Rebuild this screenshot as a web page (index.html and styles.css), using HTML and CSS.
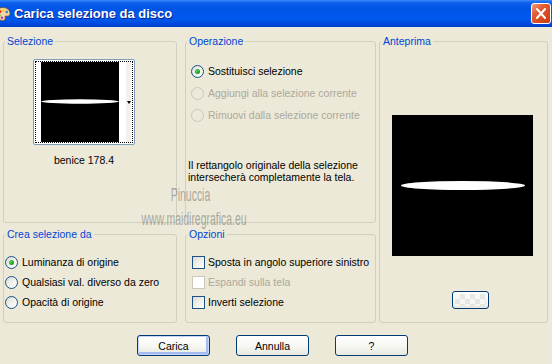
FILE: index.html
```html
<!DOCTYPE html>
<html lang="it">
<head>
  <meta charset="UTF-8">
  <title>Carica selezione da disco</title>
  <link rel="stylesheet" href="styles.css">
</head>
<body>
  <div class="window">
    <div class="titlebar">
      <svg class="app-icon" viewBox="0 0 16 16">
        <path d="M8 1.5c4 0 7 2.6 7 6 0 2.4-1.8 3.2-3.2 2.6-1.2-.5-2 .3-1.6 1.6.5 1.6-.6 2.8-2.6 2.8C3.9 14.5 1 11.6 1 8s3-6.5 7-6.5z" fill="#f3d7a2" stroke="#7a4b1e" stroke-width="0.8"/>
        <circle cx="5" cy="5.5" r="1.5" fill="#e8321e"/>
        <circle cx="8.6" cy="4.4" r="1.4" fill="#f6d21c"/>
        <circle cx="11.8" cy="6" r="1.3" fill="#2a7de1"/>
        <circle cx="4.2" cy="9.4" r="1.4" fill="#3bb33b"/>
        <circle cx="7" cy="11.8" r="1.2" fill="#a33ad0"/>
      </svg>
      <span class="title">Carica selezione da disco</span>
      <button class="close-btn" title="Chiudi">
        <svg viewBox="0 0 20 21">
          <line x1="5.5" y1="5.5" x2="14.5" y2="15.5" stroke="#fff" stroke-width="2.2" stroke-linecap="round"/>
          <line x1="14.5" y1="5.5" x2="5.5" y2="15.5" stroke="#fff" stroke-width="2.2" stroke-linecap="round"/>
        </svg>
      </button>
    </div>

    <div class="dialog">
      <div class="groups">
        <fieldset class="group g-sel">
          <legend>Selezione</legend>
          <div class="sel-wrap">
            <div class="thumb">
              <div class="thumb-focus">
                <div class="thumb-img">
                  <svg viewBox="0 0 78 80" width="78" height="80">
                    <ellipse cx="39" cy="39.5" rx="39" ry="2.2" fill="#fff"/>
                  </svg>
                </div>
                <div class="thumb-strip"><span class="arrow"></span></div>
              </div>
            </div>
            <div class="thumb-name">benice 178.4</div>
          </div>
        </fieldset>

        <fieldset class="group g-op">
          <legend>Operazione</legend>
          <div class="opt-list op-list">
            <label class="opt"><span class="radio checked"></span>Sostituisci selezione</label>
            <label class="opt disabled"><span class="radio"></span>Aggiungi alla selezione corrente</label>
            <label class="opt disabled"><span class="radio"></span>Rimuovi dalla selezione corrente</label>
          </div>
          <p class="info">Il rettangolo originale della selezione<br>intersecherà completamente la tela.</p>
        </fieldset>

        <fieldset class="group g-prev">
          <legend>Anteprima</legend>
          <div class="preview">
            <svg viewBox="0 0 141 141" width="141" height="141">
              <ellipse cx="71" cy="70.5" rx="62" ry="4.5" fill="#fff"/>
            </svg>
          </div>
          <button class="swatch-btn"><span class="checker"></span></button>
        </fieldset>

        <fieldset class="group g-crea">
          <legend>Crea selezione da</legend>
          <div class="opt-list crea-list">
            <label class="opt"><span class="radio checked"></span>Luminanza di origine</label>
            <label class="opt"><span class="radio"></span>Qualsiasi val. diverso da zero</label>
            <label class="opt"><span class="radio"></span>Opacità di origine</label>
          </div>
        </fieldset>

        <fieldset class="group g-opz">
          <legend>Opzioni</legend>
          <div class="opt-list opz-list">
            <label class="opt"><span class="check"></span>Sposta in angolo superiore sinistro</label>
            <label class="opt disabled"><span class="check"></span>Espandi sulla tela</label>
            <label class="opt"><span class="check"></span>Inverti selezione</label>
          </div>
        </fieldset>
      </div>

      <div class="buttons">
        <button class="btn default">Carica</button>
        <button class="btn">Annulla</button>
        <button class="btn">?</button>
      </div>

      <div class="watermark">Pinuccia<br>www.maidiregrafica.eu</div>
    </div>
  </div>
</body>
</html>
```

FILE: styles.css
```css
body {
  margin: 0;
  background: #ece9d8;
  font-family: 'Liberation Sans', Arial, sans-serif;
  font-size: 10.5px;
  line-height: 13px;
  color: #000;
}
.window {
  width: 552px;
  height: 364px;
  overflow: hidden;
  background: #ece9d8;
}

/* Title bar */
.titlebar {
  height: 27px;
  display: flex;
  align-items: center;
  overflow: hidden;
  background: linear-gradient(#3d8af7 0, #0a5eea 3px, #0055e5 9px, #0058ee 19px, #0049dc 24px, #003ccb 27px);
}
.app-icon {
  width: 16px;
  height: 16px;
  margin-left: -5px;
  margin-right: 3px;
  flex: none;
}
.title {
  flex: 1;
  color: #fff;
  font-weight: bold;
  font-size: 13px;
  line-height: 15px;
  text-shadow: 1px 1px #0a1e8c;
  white-space: nowrap;
}
.close-btn {
  width: 20px;
  height: 21px;
  margin-right: 1px;
  padding: 0;
  border: 1px solid #fff;
  border-radius: 3px;
  background: linear-gradient(135deg, #f29d7e 0, #e45c33 35%, #d4491f 70%, #c23c16 100%);
  display: flex;
}
.close-btn svg {
  width: 100%;
  height: 100%;
}

/* Groups */
.groups {
  display: grid;
  grid-template-columns: 174px 8px 191px 3px 169px;
  grid-template-rows: 188px 5px 95px;
  padding: 8px 0 0 3px;
}
.group {
  margin: 0;
  padding: 0;
  min-width: 0;
  border: 1px solid #d0d0bf;
  border-radius: 3px;
  box-sizing: border-box;
}
.group legend {
  margin-left: 1px;
  padding: 0 2px;
  color: #0046d5;
  line-height: 13px;
}
.g-sel { grid-column: 1; grid-row: 1; }
.g-op { grid-column: 3; grid-row: 1; }
.g-prev { grid-column: 5; grid-row: 1 / 4; }
.g-crea { grid-column: 1; grid-row: 3; }
.g-opz { grid-column: 3; grid-row: 3; }

/* Selection thumbnail */
.sel-wrap {
  width: 102px;
  margin: 11px 0 0 29px;
}
.thumb {
  width: 102px;
  height: 86px;
  box-sizing: border-box;
  border: 1px solid #7f9db9;
  border-radius: 2px;
  padding: 1px;
  background: #fff;
}
.thumb-focus {
  height: 100%;
  box-sizing: border-box;
  border: 1px dotted #000;
  padding: 0 1px 0 5px;
  display: flex;
}
.thumb-img {
  width: 78px;
  height: 80px;
  background: #000;
}
.thumb-img svg { display: block; }
.thumb-strip {
  width: 12px;
  display: flex;
  align-items: center;
  justify-content: flex-end;
  background: linear-gradient(90deg, #fff 0, #fff 55%, #f1f1ee 55%, #f1f1ee 100%);
}
.arrow {
  width: 0;
  height: 0;
  margin: 0 0 0 0;
  border-left: 2.5px solid transparent;
  border-right: 2.5px solid transparent;
  border-top: 3px solid #000;
}
.thumb-name {
  margin-top: 9px;
  text-align: center;
}

/* Radios and checkboxes */
.opt-list {
  display: flex;
  flex-direction: column;
}
.opt {
  display: flex;
  align-items: center;
  gap: 4px;
  height: 20px;
  white-space: nowrap;
}
.op-list { margin: 12px 0 0 5px; }
.op-list .opt { height: 22px; }
.crea-list { margin: 11px 0 0 1px; }
.opz-list { margin: 11px 0 0 6px; }
.opz-list .opt { gap: 3px; }
.opt.disabled { color: #aca899; }

.radio {
  width: 13px;
  height: 13px;
  box-sizing: border-box;
  border: 1px solid #1c5180;
  border-radius: 50%;
  background: linear-gradient(135deg, #dcdcd7 0, #f4f4f0 60%, #fff 100%);
  display: flex;
  align-items: center;
  justify-content: center;
  flex: none;
}
.radio.checked::after {
  content: "";
  width: 5px;
  height: 5px;
  border-radius: 50%;
  background: radial-gradient(circle at 35% 35%, #55d655 0, #21a121 60%, #1a8c1a 100%);
}
.disabled .radio {
  border-color: #cac8bb;
  background: #ece9d8;
}
.check {
  width: 13px;
  height: 13px;
  box-sizing: border-box;
  border: 1px solid #1c5180;
  background: linear-gradient(135deg, #dcdcd7 0, #f2f2ee 60%, #fff 100%);
  flex: none;
}
.disabled .check {
  border-color: #cac8bb;
  background: #fff;
}

.info {
  margin: 33px 0 0 2px;
  line-height: 12px;
  white-space: nowrap;
}

/* Preview */
.preview {
  width: 141px;
  height: 141px;
  margin: 67px 0 0 12px;
  background: #000;
}
.preview svg { display: block; }
.swatch-btn {
  display: block;
  width: 37px;
  height: 18px;
  margin: 35px 0 0 72px;
  padding: 2px;
  border: 1px solid #003c74;
  border-radius: 3px;
  background: linear-gradient(#fff, #f4f4f1 70%, #e6e5de);
}
.checker {
  display: block;
  height: 100%;
  background: repeating-conic-gradient(#e2e2e0 0 25%, #f6f6f4 0 50%) 0 0 / 10px 10px;
  opacity: 0.8;
}

/* Bottom buttons */
.buttons {
  display: flex;
  gap: 26px;
  padding: 12px 0 0 137px;
}
.btn {
  width: 73px;
  height: 21px;
  padding: 0;
  border: 1px solid #003c74;
  border-radius: 3px;
  background: linear-gradient(#fff 0, #f6f6f2 55%, #e9e8e0 100%);
  font-family: inherit;
  font-size: 10.5px;
  color: #000;
}
.btn.default {
  box-shadow: inset 0 0 0 1px #c5d5fc, inset -1px -1px 0 2px #a3bbf0;
}

/* Watermark over the dialog */
.dialog { position: relative; }
.watermark {
  position: absolute;
  left: 106px;
  top: 156px;
  width: 169px;
  text-align: center;
  font-size: 18px;
  line-height: 24px;
  color: rgba(110, 110, 105, 0.55);
  transform: scaleX(0.58);
  transform-origin: center top;
  white-space: nowrap;
  pointer-events: none;
}
```
